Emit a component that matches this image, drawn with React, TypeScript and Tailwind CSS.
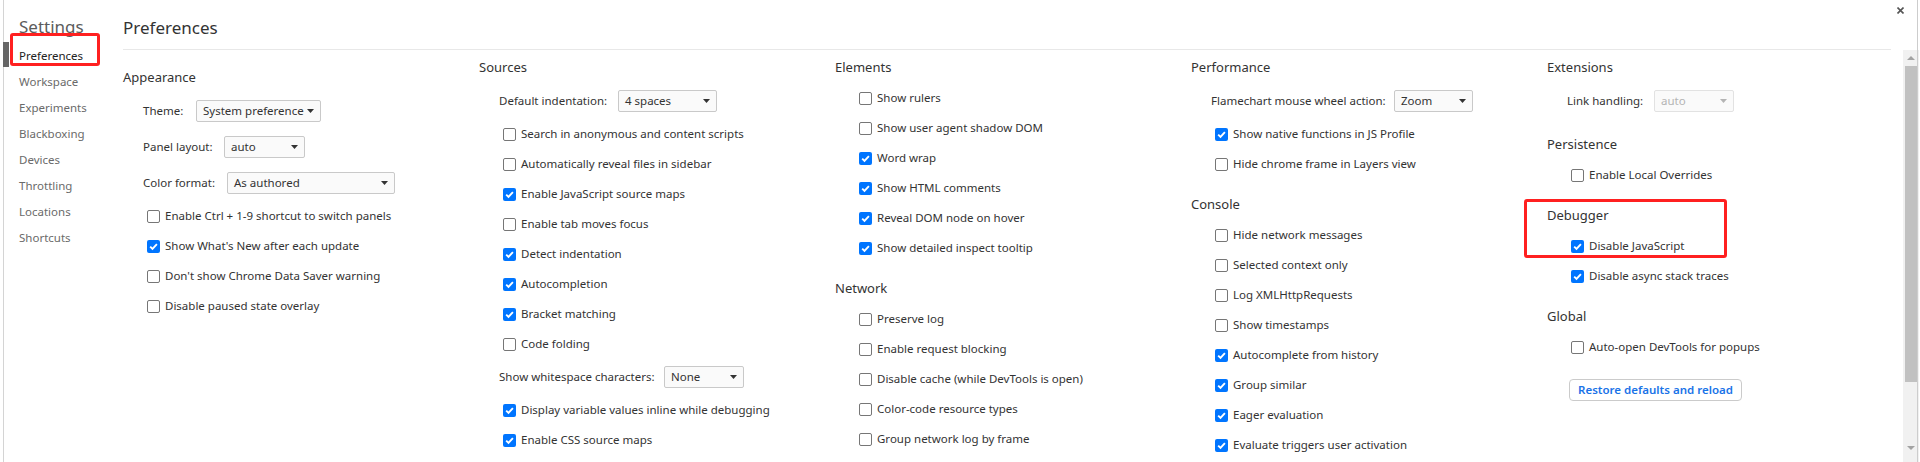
import clsx from "clsx";

type Row =
  | { kind: "check"; label: string; on?: boolean }
  | {
      kind: "select";
      label: string;
      value: string;
      labelW: string;
      selectW: string;
      disabled?: boolean;
    };

type Section = { title: string; rows: Row[] };

const check = (label: string, on = false): Row => ({ kind: "check", label, on });

const navItems = [
  "Preferences",
  "Workspace",
  "Experiments",
  "Blackboxing",
  "Devices",
  "Throttling",
  "Locations",
  "Shortcuts",
];

const columns: { pad?: string; sections: Section[]; restore?: boolean }[] = [
  {
    pad: "pt-[10px]",
    sections: [
      {
        title: "Appearance",
        rows: [
          { kind: "select", label: "Theme:", value: "System preference", labelW: "w-[53px]", selectW: "w-[125px]" },
          { kind: "select", label: "Panel layout:", value: "auto", labelW: "w-[81px]", selectW: "w-[81px]" },
          { kind: "select", label: "Color format:", value: "As authored", labelW: "w-[84px]", selectW: "w-[168px]" },
          check("Enable Ctrl + 1-9 shortcut to switch panels"),
          check("Show What's New after each update", true),
          check("Don't show Chrome Data Saver warning"),
          check("Disable paused state overlay"),
        ],
      },
    ],
  },
  {
    sections: [
      {
        title: "Sources",
        rows: [
          { kind: "select", label: "Default indentation:", value: "4 spaces", labelW: "w-[119px]", selectW: "w-[99px]" },
          check("Search in anonymous and content scripts"),
          check("Automatically reveal files in sidebar"),
          check("Enable JavaScript source maps", true),
          check("Enable tab moves focus"),
          check("Detect indentation", true),
          check("Autocompletion", true),
          check("Bracket matching", true),
          check("Code folding"),
          { kind: "select", label: "Show whitespace characters:", value: "None", labelW: "w-[165px]", selectW: "w-[80px]" },
          check("Display variable values inline while debugging", true),
          check("Enable CSS source maps", true),
        ],
      },
    ],
  },
  {
    sections: [
      {
        title: "Elements",
        rows: [
          check("Show rulers"),
          check("Show user agent shadow DOM"),
          check("Word wrap", true),
          check("Show HTML comments", true),
          check("Reveal DOM node on hover", true),
          check("Show detailed inspect tooltip", true),
        ],
      },
      {
        title: "Network",
        rows: [
          check("Preserve log"),
          check("Enable request blocking"),
          check("Disable cache (while DevTools is open)"),
          check("Color-code resource types"),
          check("Group network log by frame"),
        ],
      },
    ],
  },
  {
    sections: [
      {
        title: "Performance",
        rows: [
          { kind: "select", label: "Flamechart mouse wheel action:", value: "Zoom", labelW: "w-[183px]", selectW: "w-[79px]" },
          check("Show native functions in JS Profile", true),
          check("Hide chrome frame in Layers view"),
        ],
      },
      {
        title: "Console",
        rows: [
          check("Hide network messages"),
          check("Selected context only"),
          check("Log XMLHttpRequests"),
          check("Show timestamps"),
          check("Autocomplete from history", true),
          check("Group similar", true),
          check("Eager evaluation", true),
          check("Evaluate triggers user activation", true),
        ],
      },
    ],
  },
  {
    restore: true,
    sections: [
      {
        title: "Extensions",
        rows: [
          { kind: "select", label: "Link handling:", value: "auto", labelW: "w-[87px]", selectW: "w-[80px]", disabled: true },
        ],
      },
      { title: "Persistence", rows: [check("Enable Local Overrides")] },
      {
        title: "Debugger",
        rows: [check("Disable JavaScript", true), check("Disable async stack traces", true)],
      },
      { title: "Global", rows: [check("Auto-open DevTools for popups")] },
    ],
  },
];

function Checkbox({ on }: { on?: boolean }) {
  if (on) {
    return (
      <span className="flex h-[13px] w-[13px] shrink-0 items-center justify-center rounded-[2px] bg-[#0075ff]">
        <svg width="9" height="9" viewBox="0 0 9 9" fill="none">
          <path d="M1.2 4.6 L3.5 6.9 L7.9 2.1" stroke="white" strokeWidth="1.9" />
        </svg>
      </span>
    );
  }
  return <span className="h-[13px] w-[13px] shrink-0 rounded-[2px] border border-[#767676] bg-white" />;
}

function SettingRow({ row }: { row: Row }) {
  if (row.kind === "check") {
    return (
      <div className="flex h-[30px] items-center pl-[24px]">
        <Checkbox on={row.on} />
        <span className="ml-[5px] whitespace-nowrap">{row.label}</span>
      </div>
    );
  }
  return (
    <div className="flex h-[36px] items-center pl-[20px]">
      <span className={clsx("shrink-0 whitespace-nowrap", row.labelW)}>{row.label}</span>
      <div
        className={clsx(
          "flex h-[22px] shrink-0 items-center justify-between rounded-[2px] border bg-[#fafafa] pl-[6px] pr-[6px]",
          row.selectW,
          row.disabled ? "border-[#e2e2e2] text-[#b4b4b4]" : "border-[#c9c9c9] text-[#333]"
        )}
      >
        <span className="whitespace-nowrap">{row.value}</span>
        <svg className="shrink-0" width="7" height="4" viewBox="0 0 7 4">
          <path d="M0 0 H7 L3.5 4 Z" fill={row.disabled ? "#b4b4b4" : "#333"} />
        </svg>
      </div>
    </div>
  );
}

export default function App() {
  return (
    <div className="relative flex h-[462px] w-[1920px] overflow-hidden bg-white font-['Noto_Sans',sans-serif] text-[11.5px] leading-[16px] text-[#333]">
      <div className="w-[3px] shrink-0" />

      {/* sidebar */}
      <aside className="w-[120px] shrink-0 border-l border-[#d4d4d4]">
        <div className="h-[43px] pl-[15px] pt-[16px] text-[17px] leading-[22px] text-[#5c5c5c]">Settings</div>
        <nav>
          {navItems.map((item, i) => (
            <div
              key={item}
              className={clsx(
                "relative flex h-[26px] items-center pl-[15px]",
                i === 0 ? "text-[#222]" : "text-[#6a6a6a]"
              )}
            >
              {i === 0 && <span className="absolute left-[-1px] top-[-1px] h-[25px] w-[6px] bg-[#666]" />}
              {item}
            </div>
          ))}
        </nav>
      </aside>

      <div className="flex min-w-0 flex-1 flex-col">
        <div className="flex h-[50px] shrink-0">
          <div className="flex-1 border-b border-[#e8e8e8] pt-[17px] text-[17px] leading-[22px] text-[#333]">
            Preferences
          </div>
          <div className="relative w-[26px]">
            <svg className="absolute left-[6px] top-[7px]" width="7" height="7" viewBox="0 0 7 7">
              <path d="M0.5 0.5 L6.5 6.5 M6.5 0.5 L0.5 6.5" stroke="#555" strokeWidth="1.6" />
            </svg>
          </div>
        </div>

        <div className="flex min-h-0 flex-1">
          <div className="flex flex-1">
            {columns.map((col, ci) => (
              <div key={ci} className={clsx("flex w-[356px] shrink-0 flex-col", col.pad)}>
                {col.sections.map((sec, si) => (
                  <section key={sec.title} className={clsx(si > 0 && "mt-[8px]")}>
                    <h2 className="h-[33px] pt-[9px] text-[13px] leading-[16px] text-[#333]">{sec.title}</h2>
                    {sec.rows.map((row) => (
                      <SettingRow key={row.label} row={row} />
                    ))}
                  </section>
                ))}
                {col.restore && (
                  <button className="ml-[22px] mt-[17px] h-[22px] w-[173px] rounded-[4px] border border-[#cbcbcb] bg-white text-[11.5px] font-semibold text-[#1a73e8]">
                    Restore defaults and reload
                  </button>
                )}
              </div>
            ))}
          </div>

          {/* scrollbar */}
          <div className="flex w-[16px] shrink-0 flex-col bg-[#f1f1f1]">
            <div className="flex h-[16px] items-center justify-center">
              <svg width="8" height="4" viewBox="0 0 8 4">
                <path d="M0 4 L4 0 L8 4 Z" fill="#a3a3a3" />
              </svg>
            </div>
            <div className="mx-[2px] h-[316px] bg-[#c1c1c1]" />
            <div className="flex-1" />
            <div className="mb-[6px] flex h-[16px] items-center justify-center">
              <svg width="8" height="4" viewBox="0 0 8 4">
                <path d="M0 0 L8 0 L4 4 Z" fill="#a3a3a3" />
              </svg>
            </div>
          </div>
          <div className="w-[10px] shrink-0" />
        </div>
      </div>

      <div className="w-[3px] shrink-0 border-l border-[#cdcdcd]" />

      {/* highlight marks */}
      <div className="absolute left-[10px] top-[33px] h-[33px] w-[90px] rounded-[3px] border-[3px] border-[#ff2020]" />
      <div className="absolute left-[1524px] top-[199px] h-[59px] w-[203px] rounded-[3px] border-[3px] border-[#ff2020]" />
    </div>
  );
}
